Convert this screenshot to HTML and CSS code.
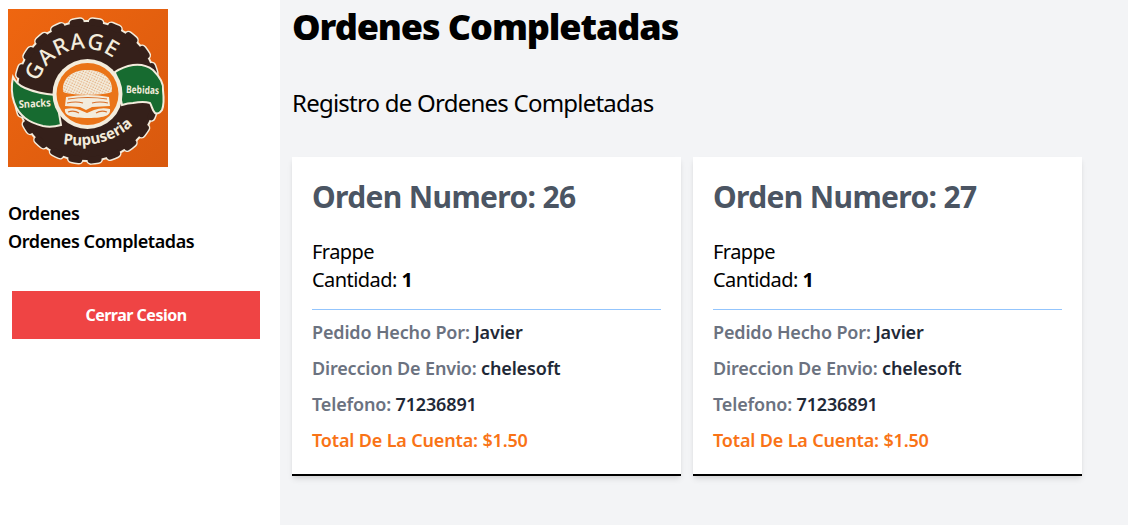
FILE: index.html
```html
<!DOCTYPE html>
<html lang="en">
<head>
  <meta charset="UTF-8" />
  <title>Ordenes Completadas</title>
  <link rel="stylesheet" href="styles.css">
</head>
<body>
  <aside class="sidebar">
    <svg class="logo" viewBox="0 0 160 158" role="img" aria-label="Garage Pupuseria">
      <defs>
        <linearGradient id="bg" x1="0" y1="0" x2="1" y2="1">
          <stop offset="0" stop-color="#ef6610" />
          <stop offset="1" stop-color="#d8590e" />
        </linearGradient>
        <pattern id="seeds" width="2.600" height="2.600" patternUnits="userSpaceOnUse" patternTransform="rotate(25)">
          <circle cx="1" cy="1" r=".6" fill="#d9823f" />
        </pattern>
        <path id="arcTop" d="M30 73 A49 49 0 0 1 111 54" />
        <path id="arcBottom" d="M55 135 C80 139 105 134 125 116" />
      </defs>
      <rect width="160" height="158" fill="url(#bg)" />
      <circle cx="79" cy="82" r="71" fill="#f3ecdc" />
      <circle cx="79" cy="82" r="69" fill="none" stroke="#f3ecdc" stroke-width="10" stroke-dasharray="7 12.420" stroke-linecap="round" />
      <circle cx="79" cy="82" r="69" fill="#35201a" />
      <circle cx="79" cy="82" r="69" fill="none" stroke="#35201a" stroke-width="7" stroke-dasharray="7 12.420" stroke-linecap="round" />
      <path class="band" d="M5 68 C8 74 12 77 17 79 C26 83 36 85 48 86 L53 116 C46 118 40 118 35 117 C27 115 22 113 17 109 C8 102 1 88 5 68Z" />
      <path class="band" d="M107 63 C113 59 119 57 125 56 C133 55 140 57 145 61 C152 68 156 74 155 81 C156 90 156 96 154 101 C152 104 149 105 147 104 C144 101 144 97 142 94 C136 92 130 93 125 94 C121 94 117 95 114 96Z" />
      <circle cx="79.500" cy="85" r="35" fill="#f3ecdc" />
      <circle cx="79.500" cy="85" r="31" fill="#ea7418" />
      <path d="M55 82 C54 68 66 61 79 61 C93 61 105 68 104 82 C104 87 55 87 55 82Z" fill="#f3ecdc" />
      <path d="M55 82 C54 68 66 61 79 61 C93 61 105 68 104 82 C104 87 55 87 55 82Z" fill="url(#seeds)" />
      <path d="M58 88 Q80 84 101 88 L102 97 L84 98 L78 101 L72 98 L57 97Z" fill="#f3ecdc" />
      <path d="M57 100 Q66 98 72 101 L79 104 L86 101 Q94 98 102 100 C103 106 98 109 80 109 C62 109 56 106 57 100Z" fill="#f3ecdc" />
      <path d="M60 90 Q80 87 99 90 M59 94 Q68 92 75 94 M84 94 Q92 92 100 94 M60 103 Q66 101 71 104 M88 104 Q93 101 99 103" stroke="#d9702a" stroke-width="1.200" fill="none" />
      <text class="logo-title"><textPath href="#arcTop">GARAGE</textPath></text>
      <text class="logo-bottom"><textPath href="#arcBottom">Pupuseria</textPath></text>
      <text class="logo-side" transform="translate(11 99) rotate(-3)" textLength="32" lengthAdjust="spacingAndGlyphs">Snacks</text>
      <text class="logo-side" transform="translate(118 84) rotate(2)" textLength="33" lengthAdjust="spacingAndGlyphs">Bebidas</text>
    </svg>
    <nav class="side-nav">
      <a href="#">Ordenes</a>
      <a href="#">Ordenes Completadas</a>
    </nav>
    <button class="logout">Cerrar Cesion</button>
  </aside>

  <main class="content">
    <h1>Ordenes Completadas</h1>
    <p class="subtitle">Registro de Ordenes Completadas</p>

    <div class="orders">
      <section class="order">
        <h2>Orden Numero: 26</h2>
        <p class="item">Frappe</p>
        <p class="item">Cantidad: <b>1</b></p>
        <hr>
        <p class="info">Pedido Hecho Por: <span>Javier</span></p>
        <p class="info">Direccion De Envio: <span>chelesoft</span></p>
        <p class="info">Telefono: <span>71236891</span></p>
        <p class="info total">Total De La Cuenta: $1.50</p>
      </section>
      <section class="order">
        <h2>Orden Numero: 27</h2>
        <p class="item">Frappe</p>
        <p class="item">Cantidad: <b>1</b></p>
        <hr>
        <p class="info">Pedido Hecho Por: <span>Javier</span></p>
        <p class="info">Direccion De Envio: <span>chelesoft</span></p>
        <p class="info">Telefono: <span>71236891</span></p>
        <p class="info total">Total De La Cuenta: $1.50</p>
      </section>
    </div>
  </main>
</body>
</html>
```

FILE: styles.css
```css
* {
  margin: 0;
  padding: 0;
  box-sizing: border-box;
}

body {
  display: flex;
  min-height: 100vh;
  background: #fff;
  color: #000;
  font-family: "Noto Sans", "Open Sans", sans-serif;
}

.sidebar {
  width: 280px;
  flex-shrink: 0;
  padding: 9px 8px 0;
}

.logo {
  display: block;
  width: 160px;
  height: 158px;
}

.logo .band {
  fill: #176b30;
  stroke: #f3ecdc;
  stroke-width: 2;
}

.logo-title {
  fill: #f3ecdc;
  font-size: 22px;
  font-weight: 500;
  letter-spacing: 1px;
}

.logo-bottom {
  fill: #f3ecdc;
  font-size: 15px;
  font-weight: 700;
}

.logo-side {
  fill: #f3ecdc;
  font-size: 10.500px;
  font-weight: 700;
}

.side-nav {
  margin-top: 32px;
}

.side-nav a {
  display: block;
  font-size: 18px;
  font-weight: 600;
  line-height: 28px;
  letter-spacing: -.42px;
  color: #000;
  text-decoration: none;
}

.logout {
  display: block;
  width: 248px;
  height: 48px;
  margin: 36px 0 0 4px;
  border: none;
  background: #ef4444;
  color: #fff;
  font-family: inherit;
  font-size: 16px;
  font-weight: 700;
  letter-spacing: -.5px;
}

.content {
  flex: 1;
  background: #f3f4f6;
  padding: 0 12px;
}

h1 {
  font-size: 36px;
  font-weight: 900;
  line-height: 54px;
  letter-spacing: -1.100px;
}

.subtitle {
  margin-top: 33px;
  font-size: 24px;
  line-height: 32px;
  letter-spacing: -.77px;
}

.orders {
  display: flex;
  gap: 12px;
  margin-top: 38px;
}

.order {
  width: 389px;
  height: 319px;
  padding: 20px;
  background: #fff;
  border-bottom: 2px solid #000;
  box-shadow: 0 4px 6px -1px rgba(0, 0, 0, .1), 0 2px 4px -1px rgba(0, 0, 0, .06);
}

h2 {
  margin-bottom: 21px;
  font-size: 30px;
  font-weight: 700;
  line-height: 40px;
  letter-spacing: -.65px;
  color: #4b5563;
}

.item {
  font-size: 20px;
  line-height: 28px;
  letter-spacing: -.55px;
}

.item b {
  font-weight: 700;
}

hr {
  margin: 15px 0 8px;
  border: none;
  border-top: 1px solid #93c5fd;
}

.info {
  margin-bottom: 8px;
  font-size: 18px;
  font-weight: 600;
  line-height: 28px;
  letter-spacing: -.16px;
  color: #6b7280;
}

.info span {
  color: #1f2937;
}

.info.total {
  margin-bottom: 0;
  color: #f97316;
}
```
